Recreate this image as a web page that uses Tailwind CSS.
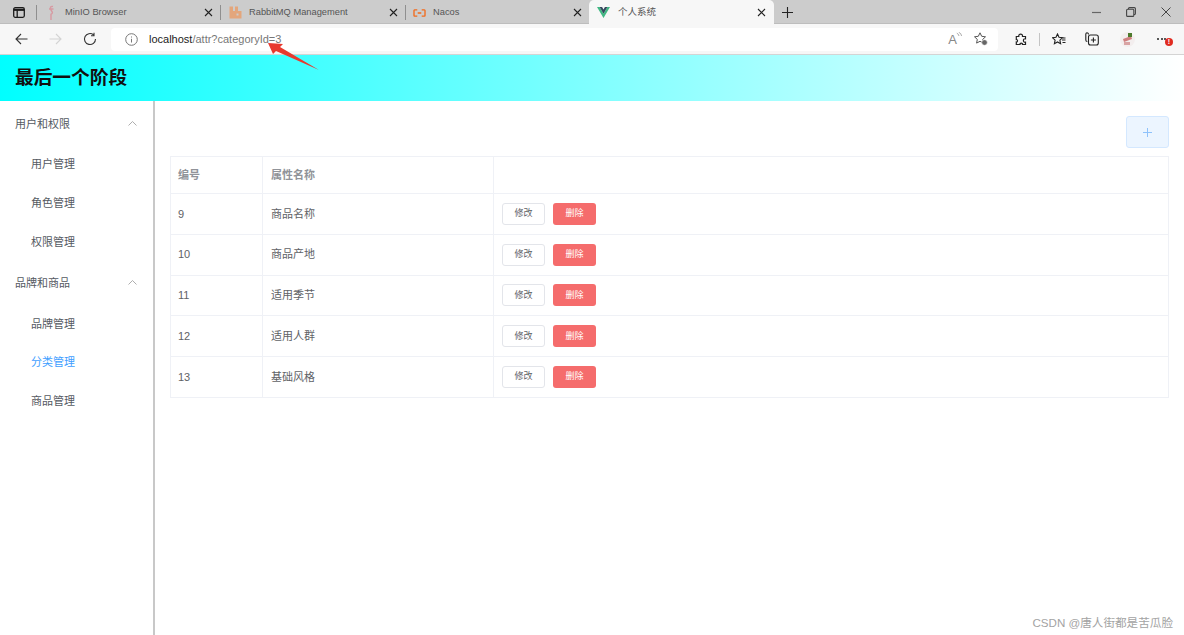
<!DOCTYPE html>
<html lang="zh">
<head>
  <meta charset="UTF-8">
  <title>个人系统</title>
  <script src="https://cdn.jsdelivr.net/npm/@tailwindcss/browser@4"></script>
</head>
<body class="bg-white text-[#606266] font-['Liberation_Sans','Noto_Sans_CJK_SC',sans-serif] overflow-hidden">
  <div class="relative w-[1184px] h-[635px] overflow-hidden flex flex-col">

    <!-- tab strip -->
    <div class="h-[24px] bg-[#cccccc] flex items-stretch shrink-0 border-b border-[#bdbdbd]">
      <div class="w-[36px] flex items-center pl-[13px] shrink-0 mt-[1px]">
        <svg width="12" height="11" viewBox="0 0 12 11" fill="none" stroke="#1c1c1c" stroke-width="1.300"><rect x=".7" y=".7" width="10.600" height="9.600" rx="1.500"/><path d="M.7 2.800h10.600" stroke-width="2.200"/><path d="M4.200 3v7"/></svg>
      </div>
      <div class="w-[184px] flex items-center border-l border-[#8f8f8f] mt-[5px] mb-[3px] pl-[11px] pr-[7px] shrink-0">
        <svg class="-my-[3px]" width="6" height="16" viewBox="0 0 6 16" fill="none" stroke="#d79aa2" stroke-width="1.400"><path d="M5 1.500C2.500 1 1.500 3 3 5s2.500 3.500-.5 4.500M3 9v6M1 4h4.500"/></svg>
        <span class="ml-[11px] text-[9.300px] text-[#555] flex-1">MinIO Browser</span>
        <svg width="9" height="9" viewBox="0 0 9 9" stroke="#222" stroke-width="1.100"><path d="M1 1l7 7M8 1l-7 7"/></svg>
      </div>
      <div class="w-[185px] flex items-center border-l border-[#8f8f8f] mt-[5px] mb-[3px] pl-[8px] pr-[7px] shrink-0">
        <svg class="-my-[3px]" width="13" height="13" viewBox="0 0 13 13" fill="#e3a67c"><path d="M0.500 0.500h3.500v4.500h2V0.500h3v4.500h3.500v7.500H0.500z"/><rect x="7.500" y="7.500" width="2" height="2" fill="#cccccc"/></svg>
        <span class="ml-[7px] text-[9.300px] text-[#555] flex-1">RabbitMQ Management</span>
        <svg width="9" height="9" viewBox="0 0 9 9" stroke="#222" stroke-width="1.100"><path d="M1 1l7 7M8 1l-7 7"/></svg>
      </div>
      <div class="w-[184px] flex items-center border-l border-[#8f8f8f] mt-[5px] mb-[3px] pl-[7px] pr-[7px] shrink-0">
        <svg width="13" height="8" viewBox="0 0 14 9" fill="none" stroke="#f26a1b" stroke-width="1.500"><path d="M4.500 1H1.500A.8.8 0 0 0 .8 1.800v5.400A.8.8 0 0 0 1.500 8h3M9.500 1h3a.8.8 0 0 1 .7.8v5.400a.8.8 0 0 1-.7.8h-3M5 4.500h4"/></svg>
        <span class="ml-[7px] text-[9.300px] text-[#555] flex-1">Nacos</span>
        <svg width="9" height="9" viewBox="0 0 9 9" stroke="#222" stroke-width="1.100"><path d="M1 1l7 7M8 1l-7 7"/></svg>
      </div>
      <div class="w-[185px] h-[24px] bg-[#f7f7f7] rounded-t-[5px] flex items-center pl-[8px] pr-[8px] shrink-0 pt-[1px]">
        <svg width="13" height="11" viewBox="0 0 13 11"><path d="M0 0h2.600l3.900 6.800L10.400 0H13L6.500 11z" fill="#41b883"/><path d="M2.600 0h2.500l1.400 2.400L7.900 0h2.500L6.500 6.800z" fill="#35495e"/></svg>
        <span class="ml-[8px] text-[9.500px] text-[#555] flex-1">个人系统</span>
        <svg width="9" height="9" viewBox="0 0 9 9" stroke="#222" stroke-width="1.100"><path d="M1 1l7 7M8 1l-7 7"/></svg>
      </div>
      <div class="w-[27px] flex items-center justify-center shrink-0 mt-[1px]">
        <svg width="11" height="11" viewBox="0 0 11 11" stroke="#222" stroke-width="1.100"><path d="M5.500 0v11M0 5.500h11"/></svg>
      </div>
      <div class="flex-1"></div>
      <div class="w-[107px] flex items-center shrink-0 pl-[15px] gap-[25px] mt-[1px]">
        <svg width="9" height="9" viewBox="0 0 9 9" stroke="#666" stroke-width="1.200"><path d="M0 4.500h9"/></svg>
        <svg width="10" height="10" viewBox="0 0 10 10" fill="none" stroke="#444" stroke-width="1.100"><rect x=".6" y="2.200" width="7.200" height="7.200" rx="1"/><path d="M2.500 2.200V1.600a1 1 0 0 1 1-1h4.900a1 1 0 0 1 1 1v4.900a1 1 0 0 1-1 1H7.800"/></svg>
        <svg width="10" height="10" viewBox="0 0 10 10" stroke="#444" stroke-width="1"><path d="M.5 .5l9 9M9.500 .5l-9 9"/></svg>
      </div>
    </div>

    <!-- toolbar -->
    <div class="h-[31px] bg-[#f7f7f7] flex items-center shrink-0 border-b border-[#d4d4d4]">
      <div class="w-[111px] flex items-center pl-[15px] gap-[21px] shrink-0">
        <svg width="13" height="12" viewBox="0 0 13 12" fill="none" stroke="#333" stroke-width="1.100"><path d="M12.500 6H1M6 1L1 6l5 5"/></svg>
        <svg width="13" height="12" viewBox="0 0 13 12" fill="none" stroke="#d4d4d4" stroke-width="1.100"><path d="M.5 6H12M7 1l5 5-5 5"/></svg>
        <svg width="14" height="14" viewBox="0 0 14 14" fill="none" stroke="#333" stroke-width="1.100"><path d="M12.500 7A5.500 5.500 0 1 1 10.500 2.800M11 .8v3H8"/></svg>
      </div>
      <div class="w-[887px] h-[23px] bg-white rounded-[4px] flex items-center pl-[14px] pr-[10px] shrink-0">
        <svg width="13" height="13" viewBox="0 0 13 13" fill="none" stroke="#777" stroke-width="1"><circle cx="6.500" cy="6.500" r="5.800"/><path d="M6.500 5.800v3.700M6.500 3.500v1"/></svg>
        <span class="ml-[11px] text-[11px] flex-1"><span class="text-[#222]">localhost</span><span class="text-[#777]">/attr?categoryId=3</span></span>
        <span class="relative text-[13px] text-[#888] leading-none mr-[17px]">A<svg class="absolute -top-[1px] left-[8px]" width="6" height="7" viewBox="0 0 6 7" fill="none" stroke="#888" stroke-width=".7"><path d="M.8 1.200q1.800.6 2.200 2.800M2.800 .3q2.500 1 2.800 3.700"/></svg></span>
        <svg width="14" height="14" viewBox="0 0 14 14" fill="none" stroke="#555" stroke-width="1"><path d="M6 .8l1.700 3.500 3.800.5-2.800 2.600.7 3.700L6 9.300l-3.400 1.800.7-3.700L.5 4.800l3.800-.5z"/><circle cx="10.500" cy="10.500" r="2.800" fill="#666" stroke="#fff" stroke-width=".6"/></svg>
      </div>
      <div class="flex items-center shrink-0 pl-[17px] flex-1">
        <svg width="12" height="13" viewBox="0 0 12 13" fill="none" stroke="#222" stroke-width="1.200"><path d="M1.300 3.500H3.800C3.300 .3 8 .3 7.500 3.500h3v2.300c-2.800-.5-2.800 3.900 0 3.400v2.300H7.500c.4-1.800-2.900-1.800-2.500 0H1.300V9c1.600.3 1.600-2.800 0-2.500z"/></svg>
        <div class="w-px h-[13px] bg-[#c4c4c4] ml-[12px]"></div>
        <svg class="ml-[12px]" width="14" height="13" viewBox="0 0 14 13" fill="none" stroke="#222" stroke-width="1.100"><path d="M5.500 1l1.500 3.300 3.500.4-2.600 2.400.7 3.600-3.100-1.800-3.100 1.800.7-3.600L.5 4.700 4 4.300zM10 7h3.500M10.500 9.500h3M10.500 5h3"/></svg>
        <svg class="ml-[19px]" width="14" height="14" viewBox="0 0 14 14" fill="none" stroke="#222" stroke-width="1.100"><path d="M3.500 2.500V2A1.500 1.500 0 0 0 2 .8H2A1.500 1.500 0 0 0 .8 2v6c0 1 .7 1.500 1.500 1.500"/><rect x="3.500" y="3" width="9.800" height="10" rx="2"/><path d="M8.400 5.500v5M5.900 8h5"/></svg>
        <div class="ml-[21px] w-[15px] h-[15px] rounded-full bg-[#f3eeee] relative shrink-0">
          <svg class="absolute inset-0" width="15" height="15" viewBox="0 0 15 15"><path d="M3 7l8-3 1 3-8 3z" fill="#cf7f7f"/><path d="M8 1h4v4H8z" fill="#4d7a2c"/><path d="M4 10h6v3H4z" fill="#d9a4a4"/></svg>
        </div>
        <div class="ml-[22px] relative w-[10px] h-[4px] shrink-0 flex gap-[1.500px] items-center -mt-[1px]">
          <span class="w-[2px] h-[2px] rounded-full bg-[#222]"></span><span class="w-[2px] h-[2px] rounded-full bg-[#222]"></span><span class="w-[2px] h-[2px] rounded-full bg-[#222]"></span>
          <span class="absolute left-[8px] top-[1px] w-[8px] h-[8px] rounded-full bg-[#e02b20] flex items-center justify-center text-[7px] leading-none font-bold text-white">!</span>
        </div>
      </div>
    </div>

    <!-- app header -->
    <header class="h-[46px] shrink-0 bg-linear-to-r/srgb from-[#00ffff] to-white flex items-center pl-[15px] pt-[1px]">
      <h1 class="text-[18.700px] font-bold text-[#111]">最后一个阶段</h1>
    </header>

    <div class="flex-1 flex min-h-0">
      <!-- sidebar -->
      <aside class="w-[155px] shrink-0 border-r-2 border-[#c8c8c8] text-[11px] text-[#555a62] pt-[3px]">
        <div class="h-[40px] flex items-center justify-between pl-[15px] pr-[16px]">
          <span>用户和权限</span>
          <svg class="-mt-[2px]" width="9" height="5" viewBox="0 0 9 5" fill="none" stroke="#999" stroke-width=".8"><path d="M.5 4.500l4-4 4 4"/></svg>
        </div>
        <div class="h-[39px] flex items-center pl-[31px] mt-[1px]">用户管理</div>
        <div class="h-[39px] flex items-center pl-[31px]">角色管理</div>
        <div class="h-[39px] flex items-center pl-[31px]">权限管理</div>
        <div class="h-[40px] flex items-center justify-between pl-[15px] pr-[16px] mt-[1.500px]">
          <span>品牌和商品</span>
          <svg class="-mt-[2px]" width="9" height="5" viewBox="0 0 9 5" fill="none" stroke="#999" stroke-width=".8"><path d="M.5 4.500l4-4 4 4"/></svg>
        </div>
        <div class="h-[38.500px] flex items-center pl-[31px] mt-[1px]">品牌管理</div>
        <div class="h-[38.500px] flex items-center pl-[31px] text-[#409eff]">分类管理</div>
        <div class="h-[38.500px] flex items-center pl-[31px]">商品管理</div>
      </aside>

      <!-- main -->
      <main class="flex-1 pl-[15px] pr-[15px] pt-[15px]">
        <div class="flex justify-end h-[40px]">
          <button class="w-[43px] h-[32px] bg-[#ecf5ff] border border-[#d4e8ff] rounded-[3px] flex items-center justify-center">
            <svg width="9" height="9" viewBox="0 0 9 9" stroke="#8fc2fb" stroke-width="1"><path d="M4.500 0v9M0 4.500h9"/></svg>
          </button>
        </div>
        <table class="w-[999px] table-fixed border-collapse text-[11px] text-[#606266]">
          <colgroup><col class="w-[92px]"><col class="w-[231px]"><col></colgroup>
          <thead>
            <tr class="h-[37px] text-[#909399] font-bold">
              <th class="border border-[#eff1f6] text-left font-bold pl-[7px] pt-[1px]">编号</th>
              <th class="border border-[#eff1f6] text-left font-bold pl-[8px] pt-[1px]">属性名称</th>
              <th class="border border-[#eff1f6]"></th>
            </tr>
          </thead>
          <tbody>
            <tr class="h-[40.800px]">
              <td class="border border-[#eff1f6] pl-[7px]">9</td>
              <td class="border border-[#eff1f6] pl-[8px]">商品名称</td>
              <td class="border border-[#eff1f6] pl-[8px]">
                <div class="flex gap-[8px]"><button class="w-[43px] h-[22px] border border-[#e3e5ea] rounded-[3px] bg-white text-[9px] text-[#606266]">修改</button><button class="w-[43px] h-[22px] bg-[#f56c6c] rounded-[3px] text-[9px] text-white">删除</button></div>
              </td>
            </tr>
            <tr class="h-[40.800px]">
              <td class="border border-[#eff1f6] pl-[7px]">10</td>
              <td class="border border-[#eff1f6] pl-[8px]">商品产地</td>
              <td class="border border-[#eff1f6] pl-[8px]">
                <div class="flex gap-[8px]"><button class="w-[43px] h-[22px] border border-[#e3e5ea] rounded-[3px] bg-white text-[9px] text-[#606266]">修改</button><button class="w-[43px] h-[22px] bg-[#f56c6c] rounded-[3px] text-[9px] text-white">删除</button></div>
              </td>
            </tr>
            <tr class="h-[40.800px]">
              <td class="border border-[#eff1f6] pl-[7px]">11</td>
              <td class="border border-[#eff1f6] pl-[8px]">适用季节</td>
              <td class="border border-[#eff1f6] pl-[8px]">
                <div class="flex gap-[8px]"><button class="w-[43px] h-[22px] border border-[#e3e5ea] rounded-[3px] bg-white text-[9px] text-[#606266]">修改</button><button class="w-[43px] h-[22px] bg-[#f56c6c] rounded-[3px] text-[9px] text-white">删除</button></div>
              </td>
            </tr>
            <tr class="h-[40.800px]">
              <td class="border border-[#eff1f6] pl-[7px]">12</td>
              <td class="border border-[#eff1f6] pl-[8px]">适用人群</td>
              <td class="border border-[#eff1f6] pl-[8px]">
                <div class="flex gap-[8px]"><button class="w-[43px] h-[22px] border border-[#e3e5ea] rounded-[3px] bg-white text-[9px] text-[#606266]">修改</button><button class="w-[43px] h-[22px] bg-[#f56c6c] rounded-[3px] text-[9px] text-white">删除</button></div>
              </td>
            </tr>
            <tr class="h-[40.800px]">
              <td class="border border-[#eff1f6] pl-[7px]">13</td>
              <td class="border border-[#eff1f6] pl-[8px]">基础风格</td>
              <td class="border border-[#eff1f6] pl-[8px]">
                <div class="flex gap-[8px]"><button class="w-[43px] h-[22px] border border-[#e3e5ea] rounded-[3px] bg-white text-[9px] text-[#606266]">修改</button><button class="w-[43px] h-[22px] bg-[#f56c6c] rounded-[3px] text-[9px] text-white">删除</button></div>
              </td>
            </tr>
          </tbody>
        </table>
      </main>
    </div>

    <!-- red annotation arrow -->
    <svg class="absolute left-[265px] top-[39px]" width="56" height="34" viewBox="0 0 56 34"><path d="M3 4l15 1-3 3L54 31 11 12l-3 3z" fill="#e8392e"/></svg>

    <!-- watermark -->
    <div class="absolute right-[11px] top-[615px] text-[11.600px] leading-[16px] text-[#a3a3a3]">CSDN @唐人街都是苦瓜脸</div>
  </div>
</body>
</html>
